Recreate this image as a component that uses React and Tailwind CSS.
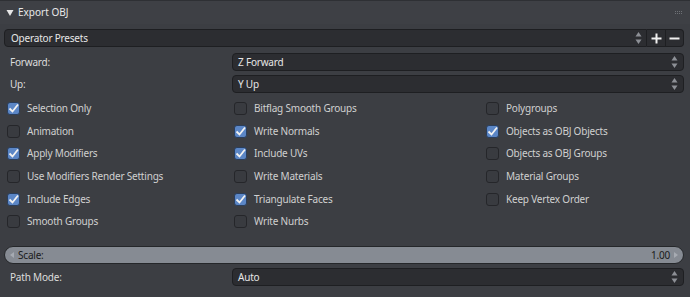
import React from "react";

const font = { fontFamily: '"Noto Sans", "Open Sans", "DejaVu Sans", sans-serif' };

const UpDown = () => (
  <svg width="7" height="14" viewBox="0 0 7 14" className="shrink-0">
    <path d="M3.5 1 L6.5 5.5 L0.5 5.5 Z" fill="#8d9096" />
    <path d="M3.5 13 L6.5 8.5 L0.5 8.5 Z" fill="#8d9096" />
  </svg>
);

const Check = ({ on }) =>
  on ? (
    <div className="w-[13px] h-[13px] rounded-[3px] bg-[#5b86c6] border border-[#2a3e5c] flex items-center justify-center shrink-0">
      <svg width="11" height="11" viewBox="0 0 11 11">
        <path d="M1.5 5.5 L4.5 8.5 L10 1.5" stroke="#f2f2f2" strokeWidth="1.8" fill="none" />
      </svg>
    </div>
  ) : (
    <div className="w-[13px] h-[13px] rounded-[3px] bg-[#393b40] border border-[#25262a] shrink-0" />
  );

const Dropdown = ({ value }) => (
  <div className="flex-1 h-[18px] rounded-[4px] bg-[#2c2d31] border border-[#1e1f22] flex items-center justify-between pl-[5px] pr-[5px] text-[#e6e6e6]">
    <span>{value}</span>
    <UpDown />
  </div>
);

const Row = ({ label, value }) => (
  <div className="flex items-center h-[22px]">
    <div className="w-[228px] pl-[6px] text-[#dcdcdc]">{label}</div>
    <Dropdown value={value} />
  </div>
);

const cols = [
  [
    ["Selection Only", true],
    ["Animation", false],
    ["Apply Modifiers", true],
    ["Use Modifiers Render Settings", false],
    ["Include Edges", true],
    ["Smooth Groups", false],
  ],
  [
    ["Bitflag Smooth Groups", false],
    ["Write Normals", true],
    ["Include UVs", true],
    ["Write Materials", false],
    ["Triangulate Faces", true],
    ["Write Nurbs", false],
  ],
  [
    ["Polygroups", false],
    ["Objects as OBJ Objects", true],
    ["Objects as OBJ Groups", false],
    ["Material Groups", false],
    ["Keep Vertex Order", false],
  ],
];

export default function App() {
  return (
    <div className="w-[690px] h-[297px] bg-[#3c3e43] text-[10px] tracking-[-0.2px] overflow-hidden" style={font}>
      {/* header */}
      <div className="h-[24px] border-t border-[#2e3034] bg-[#3e4045] flex items-center justify-between pl-[6px] pr-[8px]">
        <div className="flex items-center gap-[4px] text-[#e8e8e8] tracking-normal">
          <svg width="8" height="8" viewBox="0 0 8 8">
            <path d="M0.5 1 L7.5 1 L4 7 Z" fill="#e6e6e6" />
          </svg>
          <span>Export OBJ</span>
        </div>
        <div className="grid grid-cols-4 gap-[1px]">
          {[0, 1, 2, 3, 4, 5, 6, 7].map((i) => (
            <div key={i} className="w-[1px] h-[1px] bg-[#6d7075]" />
          ))}
        </div>
      </div>

      <div className="px-[4px] pr-[6px]">
        {/* presets */}
        <div className="flex items-center h-[18px] mt-[5px]">
          <div className="flex-1 h-[18px] rounded-l-[4px] bg-[#2c2d31] border border-[#1e1f22] flex items-center justify-between pl-[6px] pr-[4px] text-[#e6e6e6]">
            <span>Operator Presets</span>
            <UpDown />
          </div>
          <div className="w-[19px] h-[18px] bg-[#2c2d31] border-y border-r border-[#1e1f22] flex items-center justify-center">
            <svg width="11" height="11" viewBox="0 0 11 11">
              <path d="M5.5 0.5 V10.5 M0.5 5.5 H10.5" stroke="#f0f0f0" strokeWidth="2" />
            </svg>
          </div>
          <div className="w-[18px] h-[18px] rounded-r-[4px] bg-[#2c2d31] border-y border-r border-[#1e1f22] flex items-center justify-center">
            <svg width="11" height="11" viewBox="0 0 11 11">
              <path d="M0.5 5.5 H10.5" stroke="#f0f0f0" strokeWidth="2" />
            </svg>
          </div>
        </div>

        <div className="mt-[4px]">
          <Row label="Forward:" value="Z Forward" />
          <Row label="Up:" value="Y Up" />
        </div>

        {/* options */}
        <div className="grid grid-cols-[227px_252px_1fr] pl-[3px] mt-[2px]">
          {cols.map((col, ci) => (
            <div key={ci} className="flex flex-col">
              {col.map(([label, on]) => (
                <div key={label} className="flex items-center h-[22.7px] gap-[7px]">
                  <Check on={on} />
                  <span className="text-[#d0d0d0]">{label}</span>
                </div>
              ))}
            </div>
          ))}
        </div>

        {/* scale slider */}
        <div className="mt-[13px] h-[18px] rounded-full bg-[#868b93] border border-[#25272a] flex items-center justify-between pl-[5px] pr-[5px] text-[#1a1a1a]">
          <div className="flex items-center gap-[4px]">
            <svg width="4" height="6" viewBox="0 0 4 6">
              <path d="M4 0 L0 3 L4 6 Z" fill="#a6abb2" />
            </svg>
            <span>Scale:</span>
          </div>
          <div className="flex items-center gap-[4px]">
            <span>1.00</span>
            <svg width="4" height="6" viewBox="0 0 4 6">
              <path d="M0 0 L4 3 L0 6 Z" fill="#a6abb2" />
            </svg>
          </div>
        </div>

        <div className="mt-[2px]">
          <Row label="Path Mode:" value="Auto" />
        </div>
      </div>
    </div>
  );
}
